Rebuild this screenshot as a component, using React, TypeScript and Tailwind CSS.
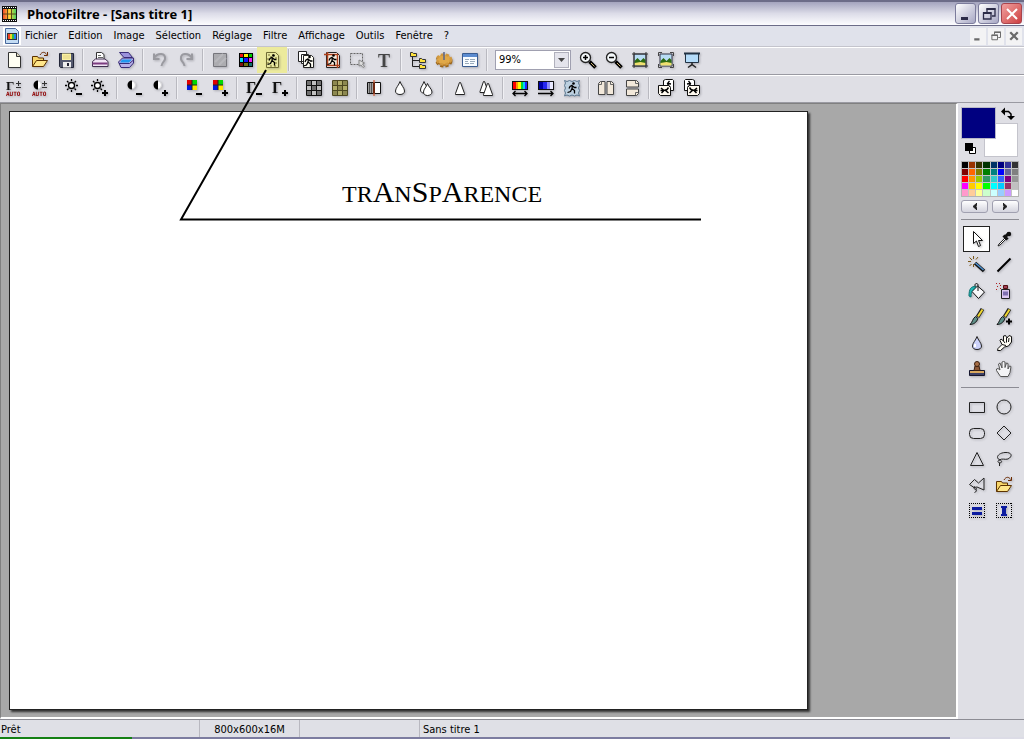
import React, { useState } from "react";

type Tool = { label: string; icon: React.ReactNode; marked?: boolean };

const S = ({ children, size = 18 }: { children: React.ReactNode; size?: number }) => (
  <svg width={size} height={size} viewBox="0 0 18 18" fill="none" aria-hidden="true" className="shrink-0 drop-shadow-[1px_1px_1px_rgba(80,80,90,0.35)]">
    {children}
  </svg>
);

// --- shared icon parts ---
const Minus = () => <path d="M11 14h6v2h-6z" fill="#000" />;
const Plus = () => <path d="M11 13h2v-2h2v2h2v2h-2v2h-2v-2h-2z" fill="#000" />;
const Sun = () => (
  <>
    <circle cx="6.500" cy="6.500" r="3" fill="#fff" stroke="#000" strokeWidth="1.300" />
    <path d="M6.500 0v2M6.500 11v2M0 6.500h2M11 6.500h2M2 2l1.500 1.500M9.500 9.500L11 11M11 2L9.500 3.500M3.500 9.500L2 11" stroke="#000" strokeWidth="1.300" />
  </>
);
const Half = () => (
  <>
    <circle cx="6.500" cy="6" r="4" fill="#fff" stroke="#d4d4d8" />
    <path d="M7 1.500a4.500 4.500 0 0 0 0 9z" fill="#000" />
  </>
);
const Rgb = () => (
  <>
    <path d="M2 1h5v5H2z" fill="#e00000" />
    <path d="M7 1h5v5H7z" fill="#00d800" />
    <path d="M2 6h5v5H2z" fill="#0018e0" />
    <path d="M7 6h5v5H7z" fill="#ffe800" />
    <path d="M7 1v10M2 6h10" stroke="#222" />
  </>
);
const Gamma = ({ size = 16, y = 14 }: { size?: number; y?: number }) => (
  <text x="1" y={y} fontSize={size} fontWeight="bold" fontFamily="Liberation Serif, serif" fill="#111">Γ</text>
);
const PlusMinus = () => <path d="M13.500 2v5M11 4.500h5M11 8.500h5" stroke="#333" />;
const Auto = () => (
  <text x="1" y="17" fontSize="6" fontWeight="bold" fontFamily="DejaVu Sans Mono, monospace" fill="#900000">AUTO</text>
);
const Runner = () => (
  <>
    <circle cx="10.500" cy="4.500" r="1.300" fill="#000" />
    <path d="M9.500 6L7 7.500 6 9.500M9.500 6.500l-.5 3 2.500 2v3M9 9.500l-1.500 3-3 1M9.500 7l2 1.500h2" stroke="#000" strokeWidth="1.300" />
  </>
);
const Cells = ({ a, b, line }: { a: string; b: string; line: string }) => (
  <>
    <path d="M2 2h14v14H2z" fill={a} />
    <path d="M7 2h4v4H7zM2 7h4v4H2zM12 7h4v4h-4zM7 12h4v4H7z" fill={b} />
    <path d="M1.500 1.500h15v15h-15zM6.500 2v14M11.500 2v14M2 6.500h14M2 11.500h14" stroke={line} />
  </>
);
const Glass = () => (
  <>
    <path d="M10.500 10.500l6 6" stroke="#000" strokeWidth="3.500" />
    <path d="M12 12l3.500 3.500" stroke="#c8b070" />
    <circle cx="6.500" cy="6.500" r="5" fill="#f4f8fa" stroke="#222" strokeWidth="1.300" />
  </>
);
const Photo = () => (
  <>
    <path d="M3 3h12v12H3z" fill="#b8dcf4" stroke="#334" />
    <path d="M3.500 10l3-3 3 3 3-3 2 2v4.500h-11z" fill="#2d6a12" />
    <path d="M3.500 12l6-1 5 1v2.500h-11z" fill="#f0e070" />
  </>
);
const Folder = () => (
  <>
    <path d="M1.500 15.500v-10h5l1 1.500h5v3" fill="#f7d66a" stroke="#5c3200" />
    <path d="M1.500 15.500l4-6h11l-4 6z" fill="#ffe68a" stroke="#5c3200" />
    <path d="M9 4c2-3.500 5-3.500 6.500-.5M16.500 1v3.500H13" stroke="#6b2a00" />
  </>
);
const Drop = ({ fill = "#fff" }: { fill?: string }) => (
  <path d="M9 2.500C8 6 4.500 9 4.500 12c0 2 1.500 3.500 4.500 3.500s4.500-1.500 4.500-3.500C13.500 9 10 6 9 2.500z" fill={fill} stroke="#222" />
);
const Brush = () => (
  <>
    <path d="M14.500 1l-5 8" stroke="#222" strokeWidth="4" />
    <path d="M14.500 1.500l-4.500 7" stroke="#f0d830" strokeWidth="2" />
    <path d="M7.500 8.500l2.500 2c-1.500 4-4.500 6-8 6 2.500-2 2.500-6 5.500-8z" fill="#5e8f88" stroke="#111" />
  </>
);
const DottedFrame = () => (
  <path d="M1 1.500h16M1 15.500h16M1.500 1v15M16.500 1v15" stroke="#000" strokeDasharray="1 1" shapeRendering="crispEdges" />
);
// upright page behind, page lying on its side in front
const TurnedPages = () => (
  <>
    <path d="M6.500 1.500l2-1h7l1 1v10h-10z" fill="#fff" stroke="#111" />
    <path d="M12.500 2l-2 2.500 1 2 2 2M11 4.500l3 .5" stroke="#000" strokeWidth="1.300" />
    <path d="M1.500 6.500h10l2 2v8h-10l-2-2z" fill="#fffaf0" stroke="#111" />
    <path d="M4 9l3 2.500 3-1 1.500-2M7 11.500L4.500 14M8 11l3.500 3M3.500 11.500h4" stroke="#000" strokeWidth="1.500" />
  </>
);

// --- first toolbar row ---
const fileTools: Tool[][] = [
  [
    { label: "Nouveau", icon: <S><path d="M3.500 1.500h8l4 4v11h-12z" fill="#fffef2" stroke="#333" /><path d="M11.500 1.500v4h4" fill="#ddd8c0" stroke="#333" /></S> },
    { label: "Ouvrir", icon: <S><Folder /></S> },
    { label: "Enregistrer", icon: <S><path d="M2.500 2.500h14v14h-13l-1-1z" fill="#555a70" stroke="#222638" /><path d="M5 2.500h9V9H5z" fill="#fbf2a0" /><path d="M6 5h7M6 7h7" stroke="#e0d088" /><path d="M6 11h8v5.500H6z" fill="#eee" /><path d="M10 12h2v3h-2z" fill="#223" /></S> },
  ],
  [
    { label: "Imprimer", icon: <S><path d="M5.500 8.500v-7h5l2.500 2v5z" fill="#fff" stroke="#333" /><path d="M7 4.500h3M7 6.500h5" stroke="#666" /><path d="M1.500 10.500l3-2.500h9.500l3 2.500v5h-15.500z" fill="#f0e4f4" stroke="#403050" /><path d="M1.500 12.500h15" stroke="#7c3c80" strokeWidth="2" /></S> },
    { label: "Numériser", icon: <S><path d="M2.500 1.500h9l4 5H7z" fill="#9a92dc" stroke="#382c78" /><path d="M1.500 11l4-4h11v5l-4 4.500H4z" fill="#b8b0e8" stroke="#382c78" /><path d="M5 8.500h10l-3 3H3z" fill="#2098f0" /><path d="M2 12.500h10.500l4-3.500" stroke="#382c78" /></S> },
  ],
  [
    { label: "Annuler", icon: <S><path d="M3 7c4-6 12-5 11 1-.5 3-3 3-3.500 7M3 2.500V8h5.500" stroke="#9a9aa0" strokeWidth="2" /></S> },
    { label: "Rétablir", icon: <S><path d="M15 7c-4-6-12-5-11 1 .5 3 3 3 3.500 7M15 2.500V8H9.500" stroke="#9a9aa0" strokeWidth="2" /></S> },
  ],
  [
    { label: "Niveaux de gris", icon: <S><path d="M2.500 2.500h13v13h-13z" fill="#acacb0" stroke="#76767c" /><path d="M4 11l8-8M8 14l7-7" stroke="#b8b8bc" strokeWidth="2" /></S> },
    { label: "Couleurs RVB", icon: <S><path d="M2 2h14v14H2z" fill="#000" /><path d="M3 3h3v3H3zM12 12h3v3h-3z" fill="#f01010" /><path d="M7 3h4v3H7z" fill="#f8f000" /><path d="M12 3h3v3h-3z" fill="#00d000" /><path d="M3 7h3v4H3z" fill="#00d8f0" /><path d="M7 7h4v4H7z" fill="#1010ff" /><path d="M12 7h3v4h-3z" fill="#f020f0" /><path d="M3 12h3v3H3z" fill="#801010" /><path d="M7 12h4v3H7z" fill="#707010" /><path d="M12 12h3v3h-3z" fill="#107070" /></S> },
    { label: "Transparence", marked: true, icon: <S><path d="M3.500 1.500h9l3 3v12h-12z" fill="#e8e8a0" stroke="#706c34" /><path d="M5 3h2v2H5zM9 3h2v2H9zM7 5h2v2H7zM12 6h2v2h-2zM4 7h2v2H4zM4 11h2v2H4zM12 11h2v2h-2zM7 14h2v2H7zM11 14h2v2h-2z" fill="#b0ac68" /><Runner /></S> },
  ],
  [
    { label: "Taille de l'image", icon: <S><path d="M1.500.5h8v10h-8zM4.500 3.500h7v9h-7z" fill="#fff" stroke="#222" /><path d="M6.500 4.500h8l2 2v10h-10z" fill="#fffef4" stroke="#222" /><g transform="translate(2 1.500)"><Runner /></g></S> },
    { label: "Taille de la zone de travail", icon: <S><path d="M3.500 1.500h10l3 3v12h-13z" fill="#fff" stroke="#222" /><path d="M5 3h10v12H5z" fill="#f7eedf" /><path d="M1 3.500h13.500V17M4.500 1v13.500H17" stroke="#b0421c" strokeWidth="1.500" /><Runner /></S> },
    { label: "Transformation", icon: <S><path d="M1.500 2.500h12v11h-12z" stroke="#666" strokeDasharray="2 1" /><path d="M10 9v6l2-1 2 2.500 1.500-1-2-2.500 2-1z" fill="#ddd" stroke="#888" /></S> },
    { label: "Texte", icon: <S><text x="3" y="16" fontSize="18" fontWeight="bold" fontFamily="Liberation Serif, serif" fill="#444">T</text></S> },
  ],
  [
    { label: "Explorateur", icon: <S><path d="M3.500 5v10.500h7M3.500 9.500h7" stroke="#222" /><path d="M1.500 1.500h2l1 1h3v3h-6zM10.500 7.500h2l1 1h3v3h-6zM10.500 13.500h2l1 1h3v3h-6z" fill="#ffe23c" stroke="#333" /></S> },
    {
      label: "Automatisation",
      icon: (
        <S>
          <ellipse cx="9" cy="10" rx="7" ry="5" fill="#b87820" stroke="#9a6418" strokeWidth="3" strokeDasharray="3 2" />
          <ellipse cx="9" cy="8.500" rx="7" ry="5" fill="#e0a848" stroke="#d09840" strokeWidth="2.500" strokeDasharray="3 2" />
          <path d="M9 1v8" stroke="#58648c" strokeWidth="1.500" />
        </S>
      ),
    },
    { label: "Préférences", icon: <S><path d="M1.500 2.500h15v13h-15z" fill="#f8fcff" stroke="#3a5c90" /><path d="M2 3h14v3H2z" fill="#5c8cd0" /><path d="M4 8.500h4M9 8.500h5M4 10.500h3M9 10.500h5M4 12.500h4M9 12.500h4" stroke="#9ab" /></S> },
  ],
];

const zoomTools: Tool[] = [
  { label: "Zoom avant", icon: <S><Glass /><path d="M4 6.500h5M6.500 4v5" stroke="#000" strokeWidth="1.500" /></S> },
  { label: "Zoom arrière", icon: <S><Glass /><path d="M4 6.500h5" stroke="#000" strokeWidth="1.500" /></S> },
  { label: "Taille réelle", icon: <S><Photo /><path d="M1 3h16M1 15h16M3 1v16M15 1v16" stroke="#333" /></S> },
  { label: "Ajuster à la fenêtre", icon: <S><Photo /><path d="M1.500 5V1.500H5M13 1.500h3.500V5M16.500 13v3.500H13M5 16.500H1.500V13" stroke="#444" /></S> },
  { label: "Plein écran", icon: <S><path d="M1 2.500h16" stroke="#234" strokeWidth="2" /><path d="M2.500 3h13v8.500h-13z" fill="#b4dcfa" stroke="#234" /><path d="M9 11.500v2l-4 3M9 13.500l4 3" stroke="#222" strokeWidth="1.500" /></S> },
];

// --- second toolbar row ---
const filterTools: Tool[][] = [
  [
    { label: "Gamma automatique", icon: <S><Gamma size={13} y={11} /><PlusMinus /><Auto /></S> },
    { label: "Contraste automatique", icon: <S><Half /><PlusMinus /><Auto /></S> },
  ],
  [
    { label: "Luminosité -", icon: <S><Sun /><Minus /></S> },
    { label: "Luminosité +", icon: <S><Sun /><Plus /></S> },
  ],
  [
    { label: "Contraste -", icon: <S><Half /><Minus /></S> },
    { label: "Contraste +", icon: <S><Half /><Plus /></S> },
  ],
  [
    { label: "Saturation -", icon: <S><Rgb /><Minus /></S> },
    { label: "Saturation +", icon: <S><Rgb /><Plus /></S> },
  ],
  [
    { label: "Gamma -", icon: <S><Gamma /><Minus /></S> },
    { label: "Gamma +", icon: <S><Gamma /><Plus /></S> },
  ],
  [
    { label: "Gris", icon: <S><Cells a="#707070" b="#c0c0c0" line="#111" /></S> },
    { label: "Sépia", icon: <S><Cells a="#8c8850" b="#b0ac68" line="#4c4820" /></S> },
  ],
  [
    { label: "Antipoussière", icon: <S><path d="M2.500 3.500h6v11h-6z" fill="#555" stroke="#111" /><path d="M3 5h5M3 7h5M3 9h5M3 11h5M3 13h5" stroke="#eee" strokeDasharray="1 1" /><path d="M9.500 3.500h6v11h-6z" fill="#fff" stroke="#111" /><path d="M9 1v16" stroke="#d04010" /></S> },
    { label: "Adoucir", icon: <S><Drop /></S> },
    { label: "Flou", icon: <S><path d="M7 2.500C6 6 3.500 8 3.500 11c0 2 1.500 3 3.500 3s4-1 4-3C11 8 8 6 7 2.500z" fill="#fff" stroke="#222" /><path d="M10.500 4.500C9.500 8 6.500 10 6.500 13c0 2 1.500 3.500 4 3.500s4.500-1.500 4.500-3.500c0-3-3.500-5-4.500-8.500z" fill="#fff" stroke="#222" /></S> },
  ],
  [
    { label: "Netteté", icon: <S><path d="M8.500 3.500h1l4 11v1h-9v-1z" fill="#fff" stroke="#222" /></S> },
    { label: "Plus net", icon: <S><path d="M6.500 2.500h1l4 11h-8.500v-1z" fill="#fff" stroke="#222" /><path d="M10.500 4.500h1l4 11v1h-9v-1z" fill="#fff" stroke="#222" /></S> },
  ],
  [
    {
      label: "Variation de teinte",
      icon: <S><path d="M1 2h16v9H1z" fill="#111" /><path d="M2 3h3v7H2z" fill="#f00" /><path d="M5 3h2v7H5z" fill="#f90" /><path d="M7 3h3v7H7z" fill="#ff0" /><path d="M10 3h2v7h-2z" fill="#0d3" /><path d="M12 3h2v7h-2z" fill="#0cf" /><path d="M14 3h2v7h-2z" fill="#22f" /><path d="M2 14.500h14M4.500 12l-2.500 2.500L4.500 17M13.500 12l2.500 2.500-2.500 2.500" stroke="#000" strokeWidth="1.300" /></S>,
    },
    {
      label: "Dégradé",
      icon: <S><path d="M1 2h16v9H1z" fill="#111" /><path d="M2 3h4v7H2z" fill="#0000a8" /><path d="M6 3h4v7H6z" fill="#2828f0" /><path d="M10 3h3v7h-3z" fill="#8c8cf8" /><path d="M13 3h3v7h-3z" fill="#eaeaff" /><path d="M1 14.500h15M13.500 12l2.500 2.500-2.500 2.500" stroke="#000" strokeWidth="1.300" /></S>,
    },
    { label: "Photomasque", icon: <S><path d="M1.500 1.500l2.500 1 2.500-1 2.500 1 2.500-1 2.500 1 2.500-1-1 2.500 1 2.500-1 2.500 1 2.500-1 2.500 1 3-2.500-1-2.500 1-2.500-1-2.500 1-2.500-1-2.500 1 1-3-1-2.500 1-2.500-1-2.500 1-2.500z" fill="#bcd0e0" stroke="#5c7890" /><Runner /></S> },
  ],
  [
    { label: "Symétrie horizontale", icon: <S><path d="M1.500 4.500l2-2h4.500v13H1.500zM10 2.500h4.500l2 2v11H10z" fill="#f2e8da" stroke="#444" /><path d="M1.500 5.500h3v-3M13.500 2.500v3h3" stroke="#666" /></S> },
    { label: "Symétrie verticale", icon: <S><path d="M3.500 1.500h10l2 2V8h-12zM3.500 10h12v4.500l-2 2h-10z" fill="#f2e8da" stroke="#444" /><path d="M12.500 1.500v3h3M15.500 13.500h-3v3" stroke="#666" /></S> },
  ],
  [
    { label: "Rotation anti-horaire", icon: <S><TurnedPages /></S> },
    { label: "Rotation horaire", icon: <S><g transform="matrix(-1 0 0 1 18 0)"><TurnedPages /></g></S> },
  ],
];

// --- side palette ---
const drawTools: Tool[] = [
  { label: "Sélection", icon: <S><path d="M5.500 1.500v12l3-2.500 2 5.500 2-1-2-5h4z" fill="#fff" stroke="#111" /></S> },
  { label: "Pipette", icon: <S><path d="M10 8l-6 6-1 2 2-1 6-6z" fill="#fff" stroke="#222" /><path d="M8.500 5.500l4 4M10 7l4-4" stroke="#111" strokeWidth="3" /><circle cx="14" cy="4" r="2.200" fill="#111" /></S> },
  { label: "Baguette magique", icon: <S><path d="M7 7l9 8" stroke="#111" strokeWidth="3.500" /><path d="M7.500 7l8 7" stroke="#4c90d0" strokeWidth="1.500" /><path d="M5.500 0v3M0 5.500h3M1.500 1.500l2.500 2.500M10 1L8 3.500M1.500 10L3.500 8M5.500 8v3" stroke="#7c5818" /></S> },
  { label: "Ligne", icon: <S><path d="M2.500 15.500l13-13" stroke="#000" strokeWidth="2" /></S> },
  { label: "Remplissage", icon: <S><path d="M9.500 4l7 6-6 6.500-6.500-7z" fill="#f8f8fa" stroke="#111" /><path d="M10 9V3c0-2-3-2-3 0v3" stroke="#111" /><path d="M8 4.500C3 4 1 7 1 14l2 1c0-4 .5-6 2-7z" fill="#20b8b8" stroke="#107070" /></S> },
  { label: "Aérographe", icon: <S><path d="M6.500 7.500h8v9h-8z" fill="#dcc8f0" stroke="#222" /><path d="M8.500 3.500h4v3h-4z" fill="#a04058" stroke="#511" /><path d="M8 9.500h5v4H8z" fill="#8070b0" /><path d="M1 1h1v1H1zM4 1h1v1H4zM2 4h1v1H2zM5 3h1v1H5zM5 6h1v1H5zM1 7h1v1H1z" fill="#b02020" /></S> },
  { label: "Pinceau", icon: <S><Brush /></S> },
  { label: "Pinceau avancé", icon: <S><Brush /><path d="M11 13.500h6M14 10.500v6" stroke="#000" strokeWidth="2" /></S> },
  { label: "Goutte", icon: <S><Drop fill="#ccd2fa" /><path d="M7 10v3" stroke="#fff" strokeWidth="2" /></S> },
  { label: "Doigt", icon: <S><path d="M2.500 16.500l.5-2 4-4-2-4 1-1.500 2.500 2V2l2-.5L12 4l2-2.500 2.500 1V8l-3 4-4 1-4 3.500z" fill="#fffdf4" stroke="#111" /><path d="M8.500 7l1.500 2M11.500 4v4.500M14 4l-.5 4M7 10.500l4 1" stroke="#111" /></S> },
  { label: "Tampon de clonage", icon: <S><path d="M1.500 10.500h15v5h-15z" fill="#3c4066" stroke="#15152c" /><path d="M2 11h14v2H2z" fill="#d8a860" /><path d="M7 6l-1 4.500h6L11 6z" fill="#8c5838" stroke="#3c2010" /><circle cx="9" cy="4" r="2.500" fill="#a87048" stroke="#3c2010" /></S> },
  { label: "Déplacement", icon: <S><path d="M5.500 16.500l-4-6V9l1.500-.5L5 10 3.500 4l1.500-1 2 5V2l1.500-.5L10 2v5.500L11.500 3l1.500.5V9l1.500-3 1.500.5-1 6-2 4z" fill="#f4f4f6" stroke="#555" /></S> },
];

const shapeTools: Tool[] = [
  { label: "Rectangle", icon: <S><path d="M1.500 4.500h15v10h-15z" stroke="#222" /></S> },
  { label: "Ellipse", icon: <S><circle cx="9" cy="9" r="7" stroke="#222" /></S> },
  { label: "Rectangle arrondi", icon: <S><rect x="1.500" y="4.500" width="15" height="10" rx="4" stroke="#222" /></S> },
  { label: "Losange", icon: <S><path d="M9 2l7 7-7 7-7-7z" stroke="#222" /></S> },
  { label: "Triangle", icon: <S><path d="M9 2.500l6.500 13h-13z" stroke="#222" /></S> },
  { label: "Lasso", icon: <S><path d="M5 10C0 8 3 3 10 2.500c7-.5 8 4 3 6.500-3 1-6-1-8.500 1 2 0 3 2 1 3M4.500 10c-3 1-1 3.500 1 2.500M4.500 13v3" stroke="#222" /></S> },
  { label: "Polygone", icon: <S><path d="M1.500 8.500l5-5 4 3.500 5.500-5v12l-7-3-3 .5zM7 10.500c-3 1 0 4 2 2M7.500 13c1.500 1 1 3-1 3.500" stroke="#222" /></S> },
  { label: "Charger une sélection", icon: <S><Folder /></S> },
  { label: "Sélection manuelle", icon: <S><DottedFrame /><path d="M4 5h10v3H4zM4 10h10v3H4z" fill="#0c1ca0" /></S> },
  { label: "Sélection texte", icon: <S><DottedFrame /><path d="M6 4h6v2h-1v6h1v2H6v-2h1V6H6z" fill="#0c1ca0" /></S> },
];

const palette = [
  "#000000", "#993300", "#333300", "#003300", "#003366", "#000080", "#333399", "#333333",
  "#800000", "#ff6600", "#808000", "#008000", "#008080", "#0000ff", "#666699", "#808080",
  "#ff0000", "#ff9900", "#99cc00", "#339966", "#33cccc", "#3366ff", "#800080", "#969696",
  "#ff00ff", "#ffcc00", "#ffff00", "#00ff00", "#00ffff", "#00ccff", "#993366", "#c0c0c0",
  "#ff99cc", "#ffcc99", "#ffff99", "#ccffcc", "#ccffff", "#99ccff", "#cc99ff", "#ffffff",
];

const menus = ["Fichier", "Edition", "Image", "Sélection", "Réglage", "Filtre", "Affichage", "Outils", "Fenêtre", "?"];

const AppLogo = () => (
  <svg width="18" height="18" viewBox="0 0 18 18" aria-hidden="true">
    <defs>
      <linearGradient id="film" x1="0" y1="0" x2="1" y2="0">
        <stop offset="0" stopColor="#f04828" />
        <stop offset="0.5" stopColor="#fcd838" />
        <stop offset="1" stopColor="#48d060" />
      </linearGradient>
    </defs>
    <path d="M2 1h15v16H2z" fill="#111" />
    <path d="M3 4h13v10H3z" fill="url(#film)" />
    <path d="M7.500 4v10M11.500 4v10M3 9h13" stroke="#5c4418" />
    <path d="M3 2.500h13M3 15.500h13" stroke="#fff" strokeDasharray="1 1" />
  </svg>
);

const DocLogo = () => (
  <svg width="18" height="18" viewBox="0 0 18 18" aria-hidden="true" className="bg-white">
    <path d="M2.500 1.500h10l3 3v12h-13z" fill="#c4dcf4" stroke="#48689c" />
    <path d="M4 6h10v7H4z" fill="#333" />
    <path d="M5 7h2v5H5z" fill="#f04020" /><path d="M7 7h2v5H7z" fill="#f8d020" /><path d="M9 7h2v5H9z" fill="#30c040" /><path d="M11 7h2v5h-2z" fill="#2080f0" />
  </svg>
);

function ToolButton({ tool }: { tool: Tool }) {
  return (
    <button type="button" aria-label={tool.label} title={tool.label} className="relative flex h-[26px] w-[26px] shrink-0 items-center justify-center">
      {tool.marked && <span className="absolute -inset-x-0.5 inset-y-0 bg-[#ecea9c]" />}
      <span className="relative">{tool.icon}</span>
    </button>
  );
}

const Separator = () => <span className="mx-[3px] h-[22px] w-0.5 shrink-0 border-l border-[#b9b9c0] bg-[#f0f0f4]" />;

function ToolGroups({ groups }: { groups: Tool[][] }) {
  return (
    <>
      {groups.map((group, i) => (
        <React.Fragment key={i}>
          {i > 0 && <Separator />}
          {group.map((tool) => <ToolButton key={tool.label} tool={tool} />)}
        </React.Fragment>
      ))}
    </>
  );
}

function WindowButton({ label, small, close, children }: { label: string; small?: boolean; close?: boolean; children: React.ReactNode }) {
  const look = small
    ? "h-[17px] w-4 bg-[#f3f3f4] text-[#6a6a6a]"
    : close
      ? "h-[21px] w-[21px] rounded-[3px] border border-[#a8444c] bg-linear-to-br from-[#f0a0a0] to-[#cc3c40] text-white"
      : "h-[21px] w-[21px] rounded-[3px] border border-[#7c7c9c] bg-linear-to-br from-white to-[#a8a8c4] text-[#2c2c48]";
  return (
    <button type="button" aria-label={label} className={`flex items-center justify-center ${look}`}>
      <svg width={small ? 12 : 16} height={small ? 12 : 16} viewBox="0 0 16 16" fill="none" stroke="currentColor" strokeWidth="2" aria-hidden="true">
        {children}
      </svg>
    </button>
  );
}

function WindowButtons({ small }: { small?: boolean }) {
  return (
    <div className="ml-auto flex gap-0.5">
      <WindowButton label="Réduire" small={small}><path d="M3 12.500h7" strokeWidth="3" /></WindowButton>
      <WindowButton label="Restaurer" small={small}>
        <path d="M6 6V3h8v7h-3" strokeWidth="1.300" />
        <path d="M2.500 7h7.500v6H2.500z" strokeWidth="1.300" />
        <path d="M5.500 3h9M2 7h8.500" />
      </WindowButton>
      <WindowButton label="Fermer" small={small} close><path d="M3 3l10 10M13 3L3 13" strokeWidth={small ? 3 : 2} /></WindowButton>
    </div>
  );
}

function ColorPanel() {
  return (
    <div className="flex flex-col">
      <div className="relative h-[50px]">
        <button type="button" aria-label="Couleur de fond" className="absolute right-px bottom-0 h-[34px] w-[34px] border border-[#c4c4cc] bg-white" />
        <button type="button" aria-label="Couleur de premier plan" className="absolute top-0 left-0 h-8 w-[35px] border border-[#b8b8c8] bg-[#000080]" />
        <button type="button" aria-label="Permuter" className="absolute top-0 right-1">
          <svg width="15" height="14" viewBox="0 0 15 14" aria-hidden="true">
            <path d="M4 4.500h4.500L11 7v3" fill="none" stroke="#000" strokeWidth="1.500" />
            <path d="M1 4.500l4-4v8zM7 9h8l-4 4z" fill="#000" />
          </svg>
        </button>
        <button type="button" aria-label="Couleurs par défaut" className="absolute bottom-0.5 left-1">
          <svg width="12" height="12" viewBox="0 0 12 12" aria-hidden="true">
            <path d="M4.500 4.500h6v6h-6z" fill="#fff" stroke="#000" />
            <path d="M0 0h8v8H0z" fill="#000" />
          </svg>
        </button>
      </div>
      <div className="mt-1 grid grid-cols-8 gap-px border border-[#b4b4b4] bg-[#c4c4c4]">
        {palette.map((color) => (
          <button key={color} type="button" aria-label={color} className="h-1.5" style={{ backgroundColor: color }} />
        ))}
      </div>
      <div className="mt-[3px] flex gap-1">
        {["Précédent", "Suivant"].map((label) => (
          <button key={label} type="button" aria-label={label} className="flex h-[13px] flex-1 items-center justify-center rounded-[3px] border border-[#a0a0b0] bg-linear-to-b from-white to-[#d4d4de]">
            <svg width="5" height="7" viewBox="0 0 5 7" aria-hidden="true">
              <path d={label === "Suivant" ? "M0 0l4 3.500L0 7l1-3.500z" : "M5 0L1 3.500 5 7 4 3.500z"} fill="#222" stroke="#222" />
            </svg>
          </button>
        ))}
      </div>
    </div>
  );
}

export default function App() {
  const [zoom, setZoom] = useState("99%");
  const [active, setActive] = useState("Sélection");

  return (
    <div className="relative flex h-screen flex-col overflow-hidden bg-[#dfdfe5] font-['DejaVu_Sans_Condensed','DejaVu_Sans',sans-serif] text-[11px] text-black">
      <header className="flex h-[26px] shrink-0 items-center border-t-2 border-b border-[#6c6c88] bg-linear-to-b from-[#a4a4be] via-[#dcdce8] to-[#fdfdff] pr-0.5">
        <AppLogo />
        <h1 className="ml-[9px] font-['Open_Sans',sans-serif] text-[13px] leading-5 font-bold">PhotoFiltre - [Sans titre 1]</h1>
        <WindowButtons />
      </header>

      <nav className="flex h-[21px] shrink-0 items-center border-b border-[#c4c4cc] bg-[#e0e2eb] pr-0.5 pl-[3px]">
        <DocLogo />
        <div className="ml-1 flex gap-[11px]">
          {menus.map((menu) => <button key={menu} type="button">{menu}</button>)}
        </div>
        <WindowButtons small />
      </nav>

      <div className="flex h-7 shrink-0 items-center border-t border-b border-t-white border-b-[#9a9aa2] pb-0.5 pl-px">
        <ToolGroups groups={fileTools} />
        <Separator />
        <div className="relative mx-1">
          <select aria-label="Zoom" value={zoom} onChange={(e) => setZoom(e.target.value)} className="h-5 w-[76px] appearance-none border border-[#a0a0b0] bg-white pl-[3px]">
            <option>50%</option>
            <option>99%</option>
            <option>100%</option>
            <option>200%</option>
          </select>
          <span className="pointer-events-none absolute inset-y-0.5 right-0.5 flex w-[15px] items-center justify-center border border-[#b0b0bc] bg-[#e4e4ec]">
            <svg width="7" height="4" viewBox="0 0 7 4" aria-hidden="true"><path d="M0 0h7L3.500 4z" fill="#444" /></svg>
          </span>
        </div>
        {zoomTools.map((tool) => <ToolButton key={tool.label} tool={tool} />)}
      </div>

      <div className="flex h-7 shrink-0 items-center border-t border-b border-t-white border-b-[#9a9aa2] pb-0.5 pl-px">
        <ToolGroups groups={filterTools} />
      </div>

      <div className="flex min-h-0 flex-1">
        <main className="min-w-0 flex-1 overflow-hidden border-t border-r-2 border-b-2 border-l border-t-[#808080] border-r-white border-b-white border-l-[#808080] bg-[#a8a8a8] px-2 py-[7px]">
          <div className="aspect-[4/3] h-full border border-[#222] bg-white pt-[62px] pl-[332px] shadow-[2px_2px_2px_#333]">
            <p className="font-['Liberation_Serif',serif] text-[24px] leading-9 whitespace-nowrap">
              TR<span className="text-[30px]">A</span>N<span className="text-[30px]">S</span>P<span className="text-[30px]">A</span>RENCE
            </p>
          </div>
        </main>

        <aside className="flex w-[66px] shrink-0 flex-col pt-1 pr-[5px] pl-[3px]">
          <ColorPanel />
          <hr className="mt-1.5 border-t border-[#8c8c94]" />
          <div className="mt-1.5 grid grid-cols-2 px-0.5">
            {drawTools.map((tool) => (
              <button
                key={tool.label}
                type="button"
                aria-label={tool.label}
                onClick={() => setActive(tool.label)}
                className={`flex h-[26px] items-center justify-center ${active === tool.label ? "border border-[#222] bg-white" : ""}`}
              >
                {tool.icon}
              </button>
            ))}
          </div>
          <hr className="mt-[5px] border-t border-[#8c8c94]" />
          <div className="mt-1.5 grid grid-cols-2 px-0.5">
            {shapeTools.map((tool) => (
              <button key={tool.label} type="button" aria-label={tool.label} className="flex h-[26px] items-center justify-center">{tool.icon}</button>
            ))}
          </div>
        </aside>
      </div>

      <footer className="shrink-0">
        <div className="flex h-[18px] items-stretch border-t border-[#8c8c94] bg-[#dfe0e6] leading-5">
          <span className="w-[200px] border-r border-[#b8b8c0] pl-px">Prêt</span>
          <span className="w-[100px] border-r border-[#b8b8c0] text-center">800x600x16M</span>
          <span className="w-[120px] border-r border-[#b8b8c0]">&nbsp;</span>
          <span className="pl-[3px]">Sans titre 1</span>
        </div>
        <div className="flex h-0.5">
          <span className="w-[132px] bg-[#148014]" />
          <span className="flex-1 bg-[#7c7ca0]" />
          <span className="w-[74px] bg-[#dcdce6]" />
        </div>
      </footer>

      {/* callout from the transparency button to its caption */}
      <svg className="pointer-events-none absolute top-0 left-0" width="720" height="230" viewBox="0 0 720 230" fill="none" aria-hidden="true">
        <path d="M266 70L181 219.500H701" stroke="#000" strokeWidth="2" />
      </svg>
    </div>
  );
}
